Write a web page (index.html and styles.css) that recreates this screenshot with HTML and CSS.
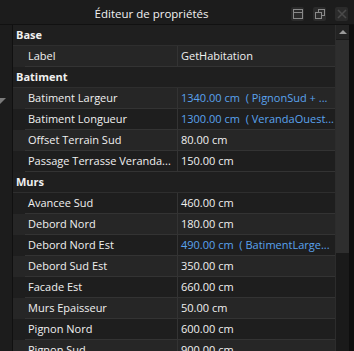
FILE: index.html
```html
<!DOCTYPE html>
<html>
<head>
<meta charset="utf-8">
<link rel="stylesheet" href="styles.css">
</head>
<body>
<div class="win">
  <div class="titlebar">
    <div class="title">Éditeur de propriétés</div>
    <div class="tbtns">
      <span class="tbtn"><svg width="12" height="12" viewBox="0 0 12 12"><rect x="1.5" y="1.5" width="9" height="9" fill="none" stroke="#8a8a8a"/><line x1="1.5" y1="4.5" x2="10.5" y2="4.5" stroke="#8a8a8a"/></svg></span>
      <span class="tbtn"><svg width="12" height="12" viewBox="0 0 12 12"><rect x="4.5" y="1.5" width="6" height="6" fill="none" stroke="#8a8a8a"/><rect x="1.5" y="4.5" width="6" height="6" fill="#2b2b2b" stroke="#8a8a8a"/></svg></span>
      <span class="tbtn dim"><svg width="12" height="12" viewBox="0 0 12 12"><path d="M2 2L10 10M10 2L2 10" stroke="#4a4a4a" stroke-width="1.6"/></svg></span>
    </div>
  </div>
  <div class="body">
    <div class="strip"><svg class="tri" width="6" height="7" viewBox="0 0 6 7"><polygon points="0,0 6,0 0,6" fill="#7a7a7a"/></svg></div>
    <div class="grid">
      <div class="hdr">Base</div>
      <div class="row odd"><span class="k">Label</span><span class="v">GetHabitation</span></div>
      <div class="hdr">Batiment</div>
      <div class="row odd"><span class="k">Batiment Largeur</span><span class="v blue">1340.00 cm  ( PignonSud + ...</span></div>
      <div class="row"><span class="k">Batiment Longueur</span><span class="v blue">1300.00 cm  ( VerandaOuest...</span></div>
      <div class="row odd"><span class="k">Offset Terrain Sud</span><span class="v">80.00 cm</span></div>
      <div class="row"><span class="k">Passage Terrasse Veranda...</span><span class="v">150.00 cm</span></div>
      <div class="hdr">Murs</div>
      <div class="row"><span class="k">Avancee Sud</span><span class="v">460.00 cm</span></div>
      <div class="row odd"><span class="k">Debord Nord</span><span class="v">180.00 cm</span></div>
      <div class="row"><span class="k">Debord Nord Est</span><span class="v blue">490.00 cm  ( BatimentLarge...</span></div>
      <div class="row odd"><span class="k">Debord Sud Est</span><span class="v">350.00 cm</span></div>
      <div class="row"><span class="k">Facade Est</span><span class="v">660.00 cm</span></div>
      <div class="row odd"><span class="k">Murs Epaisseur</span><span class="v">50.00 cm</span></div>
      <div class="row"><span class="k">Pignon Nord</span><span class="v">600.00 cm</span></div>
      <div class="row odd"><span class="k">Pignon Sud</span><span class="v">900.00 cm</span></div>
    </div>
    <div class="sb">
      <div class="sbup"><svg width="8" height="5" viewBox="0 0 8 5"><polygon points="4,0 8,4 0,4" fill="#9a9a9a"/></svg></div>
      <div class="thumb"></div>
    </div>
    <div class="edge"></div>
  </div>
</div>
</body>
</html>
```
FILE: styles.css
```css
html, body {
  margin: 0;
  padding: 0;
  background: #1c1c1c;
  overflow: hidden;
}
.win {
  width: 354px;
  height: 351px;
  display: flex;
  flex-direction: column;
  font-family: "Open Sans", "Noto Sans", sans-serif;
  font-size: 11px;
  color: #f0f0f0;
}
.titlebar {
  height: 24px;
  flex: none;
  display: flex;
  align-items: center;
  background: #1c1c1c;
  border-bottom: 1px solid #111;
  padding-left: 12px;
}
.title {
  flex: 1;
  text-align: center;
  font-size: 11.5px;
  padding-top: 2px;
  color: #f2f2f2;
}
.tbtns {
  display: flex;
  gap: 9px;
  padding-right: 6px;
  padding-top: 3px;
}
.tbtn {
  width: 13px;
  height: 14px;
  background: #2b2b2b;
  border-radius: 2px;
  display: flex;
  align-items: center;
  justify-content: center;
}
.body {
  flex: 1;
  display: flex;
  min-height: 0;
}
.strip {
  width: 12px;
  flex: none;
  background: #1c1c1c;
  border-right: 1px solid #101010;
  position: relative;
}
.tri {
  position: absolute;
  left: 0;
  top: 73px;
}
.grid {
  width: 322px;
  flex: none;
  display: flex;
  flex-direction: column;
  background: #1f1f1f;
}
.hdr {
  height: 20px;
  flex: none;
  line-height: 20px;
  font-weight: bold;
  padding-left: 3px;
  background: #1f1f1f;
  border-bottom: 1px solid #2e2e2e;
}
.row {
  height: 21px;
  flex: none;
  display: flex;
  background: #1e1e1e;
  position: relative;
}
.row.odd {
  background: #262626;
}
.row::after {
  content: "";
  position: absolute;
  left: 12px;
  right: 0;
  bottom: 0;
  height: 1px;
  background: #333;
}
.k {
  width: 149px;
  flex: none;
  padding-left: 15px;
  line-height: 20px;
  white-space: nowrap;
  overflow: hidden;
}
.v {
  flex: 1;
  border-left: 1px solid #333;
  padding-left: 3px;
  line-height: 20px;
  white-space: pre;
  overflow: hidden;
}
.blue {
  color: #5aa3ee;
}
.sb {
  width: 13px;
  flex: none;
  border-left: 1px solid #2c2c2c;
  background: #1a1a1a;
  display: flex;
  flex-direction: column;
}
.sbup {
  height: 14px;
  display: flex;
  align-items: center;
  justify-content: center;
  background: #232323;
}
.thumb {
  height: 213px;
  margin-top: 1px;
  background: #2e2e2e;
}
.edge {
  flex: 1;
  background: #0e0e0e;
}
```
